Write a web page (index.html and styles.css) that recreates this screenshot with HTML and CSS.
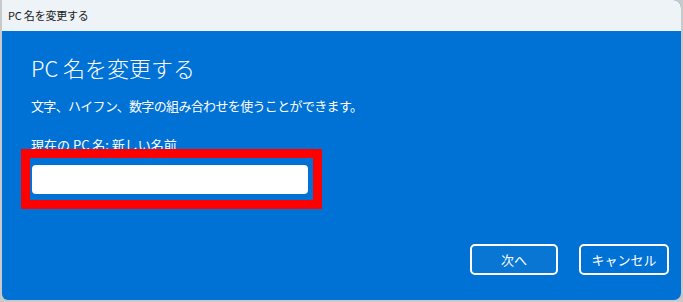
FILE: index.html
```html
<!DOCTYPE html>
<html lang="ja">
<head>
  <meta charset="UTF-8">
  <meta name="viewport" content="width=device-width, initial-scale=1">
  <title>PC 名を変更する</title>
  <link rel="stylesheet" href="styles.css">
</head>
<body>
  <div class="window">
    <div class="titlebar">PC 名を変更する</div>
    <div class="content">
      <h1>PC 名を変更する</h1>
      <p class="desc">文字、ハイフン、数字の組み合わせを使うことができます。</p>
      <label class="label" for="newname">現在の PC 名: 新しい名前</label>
      <div class="field">
        <input id="newname" class="name-input" type="text">
        <div class="highlight"></div>
      </div>
      <div class="actions">
        <button class="btn">次へ</button>
        <button class="btn">キャンセル</button>
      </div>
    </div>
  </div>
</body>
</html>
```

FILE: styles.css
```css
* {
  box-sizing: border-box;
}

body {
  margin: 0;
  background: #c9c9c9;
  font-family: "Noto Sans CJK JP", "Noto Sans", sans-serif;
  height: 302px;
  overflow: hidden;
}

.window {
  margin-left: 2px;
  width: 679px;
  height: 300px;
  background: #0071d5;
  border-radius: 0 8px 7px 6px;
  overflow: hidden;
  display: flex;
  flex-direction: column;
}

.titlebar {
  height: 31px;
  flex: none;
  background: #eef3f8;
  color: #1a1a1a;
  font-size: 11px;
  line-height: 31px;
  padding-left: 6px;
  letter-spacing: -0.2px;
}

.content {
  flex: 1;
  display: flex;
  flex-direction: column;
  padding: 21px 12px 0 29px;
  color: #fff;
}

h1 {
  margin: 0;
  font-size: 22px;
  font-weight: 300;
  line-height: 30px;
}

.desc {
  margin: 14px 0 0;
  font-size: 13px;
  line-height: 20px;
  letter-spacing: -0.65px;
}

.label {
  margin-top: 19px;
  font-size: 13px;
  line-height: 20px;
}

.field {
  position: relative;
  margin-top: 10px;
  margin-left: 1px;
  width: 276px;
}

.name-input {
  display: block;
  width: 276px;
  height: 29px;
  border: none;
  border-radius: 4px;
  background: #fff;
  outline: none;
}

.highlight {
  position: absolute;
  left: -11px;
  top: -16px;
  width: 301px;
  height: 60px;
  border: 9px solid #ff0000;
  pointer-events: none;
}

.actions {
  display: flex;
  justify-content: flex-end;
  gap: 21px;
  margin-top: 50px;
}

.btn {
  height: 31px;
  width: 88px;
  border: 2px solid #fff;
  border-radius: 5px;
  background: #0a76d3;
  color: #fff;
  font-family: inherit;
  font-size: 13px;
  cursor: pointer;
}

.btn + .btn {
  width: 90px;
  background: #0071d5;
}
```
